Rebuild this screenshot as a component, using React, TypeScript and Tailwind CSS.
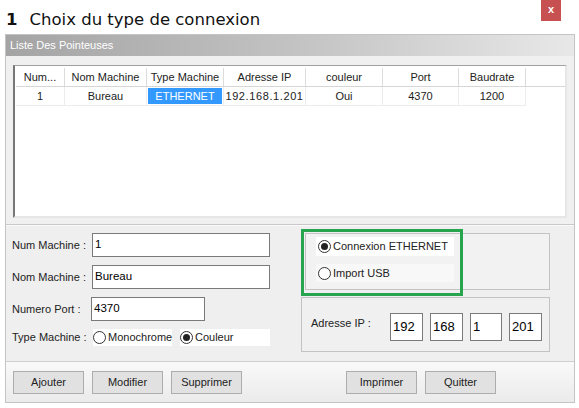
import React from "react";

const columns = [
    { label: "Num...", width: "w-[49px]" },
    { label: "Nom Machine", width: "w-[82px]" },
    { label: "Type Machine", width: "w-[77px]" },
    { label: "Adresse IP", width: "w-[82px]" },
    { label: "couleur", width: "w-[77px]" },
    { label: "Port", width: "w-[76px]" },
    { label: "Baudrate", width: "w-[67px]" },
];

const row = ["1", "Bureau", "ETHERNET", "192.168.1.201", "Oui", "4370", "1200"];

const Radio = ({ checked }: { checked?: boolean }) => (
    <span className="mr-[2px] flex h-[13px] w-[13px] shrink-0 items-center justify-center rounded-full border border-[#333] bg-white">
        {checked && <span className="h-[7px] w-[7px] rounded-full bg-[#222]" />}
    </span>
);

const Field = ({ label, value, width }: { label: string; value: string; width: string }) => (
    <div className="flex h-[24px] items-center">
        <span className="w-[80px] shrink-0 text-[11px] text-[#222]">{label}</span>
        <div className={`${width} flex h-[24px] items-center border border-[#7a7a7a] bg-white px-[2px] text-[11.5px] text-black`}>
            {value}
        </div>
    </div>
);

const Btn = ({ children }: { children: string }) => (
    <button className="h-[23px] w-[71px] border border-[#adadad] bg-[#e1e1e1] text-[11px] text-[#222]">
        {children}
    </button>
);

export default function App() {
    return (
        <div className="relative h-[408px] w-[579px] overflow-hidden bg-white font-['Liberation_Sans',Arial,sans-serif]">
            <div className="flex h-[34px] items-center pl-[6px] pt-[7px] font-['DejaVu_Sans',Verdana,sans-serif] text-[16.5px] text-[#111]">
                <span className="mr-[12px] font-bold">1</span>
                <span>Choix du type de connexion</span>
            </div>
            <div className="absolute right-[18px] top-0 flex h-[21px] w-[20px] items-center justify-center bg-[#c75050] pb-[3px] text-[11px] font-bold text-white">
                x
            </div>

            <div className="mx-[5px] flex h-[369px] w-[570px] flex-col border border-[#c4c4c4] bg-[#f0f0f0]">
                <div className="flex h-[21px] items-center bg-gradient-to-r from-[#a4a4a4] via-[#c2c2c2] to-[#e8e8e8] px-[4px] text-[11px] text-white">
                    Liste Des Pointeuses
                </div>

                <div className="h-[169px] border-b border-[#c8c8c8] px-[7px] pt-[9px]">
                    <div className="h-[153px] border-l-2 border-t border-b-2 border-r-2 border-l-[#777] border-t-[#a0a0a0] border-r-[#e6e6e6] border-b-[#e6e6e6] bg-white pl-[1px] pt-[2px]">
                        <div className="flex h-[19px] border-b border-[#d6d6d6] text-[11px] text-[#222]">
                            {columns.map((c) => (
                                <div key={c.label} className={`${c.width} flex items-center justify-center border-r border-[#dcdcdc]`}>
                                    {c.label}
                                </div>
                            ))}
                            <div className="flex-1" />
                        </div>
                        <div className="flex h-[19px] text-[11px] text-[#222]">
                            {columns.map((c, i) => (
                                <div key={c.label} className={`${c.width} flex items-center justify-center border-b border-r border-[#ececec] ${i === 2 ? "px-[1px] py-[1px]" : ""}`}>
                                    {i === 2 ? (
                                        <span className="flex h-full w-full items-center justify-center bg-[#3399ff] text-white">{row[i]}</span>
                                    ) : (
                                        <span className={i === 3 ? "tracking-[0.6px]" : ""}>{row[i]}</span>
                                    )}
                                </div>
                            ))}
                        </div>
                    </div>
                </div>

                <div className="flex h-[136px] border-t border-[#fafafa] bg-[#efefef]">
                    <div className="flex w-[295px] flex-col gap-[8px] pl-[6px] pt-[7px]">
                        <Field label="Num Machine :" value="1" width="w-[178px]" />
                        <Field label="Nom Machine :" value="Bureau" width="w-[178px]" />
                        <div className="flex h-[24px] items-center">
                            <span className="w-[79px] shrink-0 text-[11px] text-[#222]">Numero Port :</span>
                            <div className="flex h-[24px] w-[114px] items-center border border-[#7a7a7a] bg-white px-[2px] text-[11.5px] text-black">
                                4370
                            </div>
                        </div>
                        <div className="flex h-[17px] items-center">
                            <span className="w-[81px] shrink-0 text-[11px] text-[#222]">Type Machine :</span>
                            <div className="flex h-[17px] w-[79px] items-center bg-white text-[11px] text-[#222]">
                                <Radio />
                                Monochrome
                            </div>
                            <div className="ml-[8px] flex h-[17px] w-[90px] items-center bg-white text-[11px] text-[#222]">
                                <Radio checked />
                                Couleur
                            </div>
                        </div>
                    </div>

                    <div className="relative flex flex-col pt-[7px]">
                        <div className="ml-[4px] flex h-[57px] w-[245px] flex-col gap-[8px] border border-[#c3c3c3] bg-[#f2f2f2] pl-[10px] pt-[3px]">
                            <div className="flex h-[19px] w-[138px] items-center bg-white pl-[2px] text-[11px] text-[#222]">
                                <Radio checked />
                                Connexion ETHERNET
                            </div>
                            <div className="flex h-[18px] w-[138px] items-center bg-[#f8f8f8] pl-[2px] text-[11px] text-[#222]">
                                <Radio />
                                Import USB
                            </div>
                        </div>
                        <div className="mt-[7px] flex h-[55px] w-[249px] items-start border border-[#c3c3c3] bg-[#f0f0f0] pl-[9px] pt-[15px]">
                            <span className="mt-[2px] w-[79px] text-[11px] text-[#222]">Adresse IP :</span>
                            <div className="flex gap-[7px]">
                                {["192", "168", "1", "201"].map((v) => (
                                    <div key={v} className={`flex h-[28px] ${v === "1" ? "w-[32px]" : "w-[33px]"} items-center border border-[#7a7a7a] bg-white px-[2px] text-[13px] text-black`}>
                                        {v}
                                    </div>
                                ))}
                            </div>
                        </div>
                        <div className="absolute left-0 top-[3px] h-[67px] w-[162px] border-[3px] border-[#27a44d]" />
                    </div>
                </div>

                <div className="flex h-[41px] items-center gap-[8px] border-t border-[#cfcfcf] bg-gradient-to-b from-[#f9f9f9] to-[#ebebeb] px-[7px]">
                    <Btn>Ajouter</Btn>
                    <Btn>Modifier</Btn>
                    <Btn>Supprimer</Btn>
                    <div className="flex-1" />
                    <Btn>Imprimer</Btn>
                    <Btn>Quitter</Btn>
                    <div className="w-[63px]" />
                </div>
            </div>
        </div>
    );
}
